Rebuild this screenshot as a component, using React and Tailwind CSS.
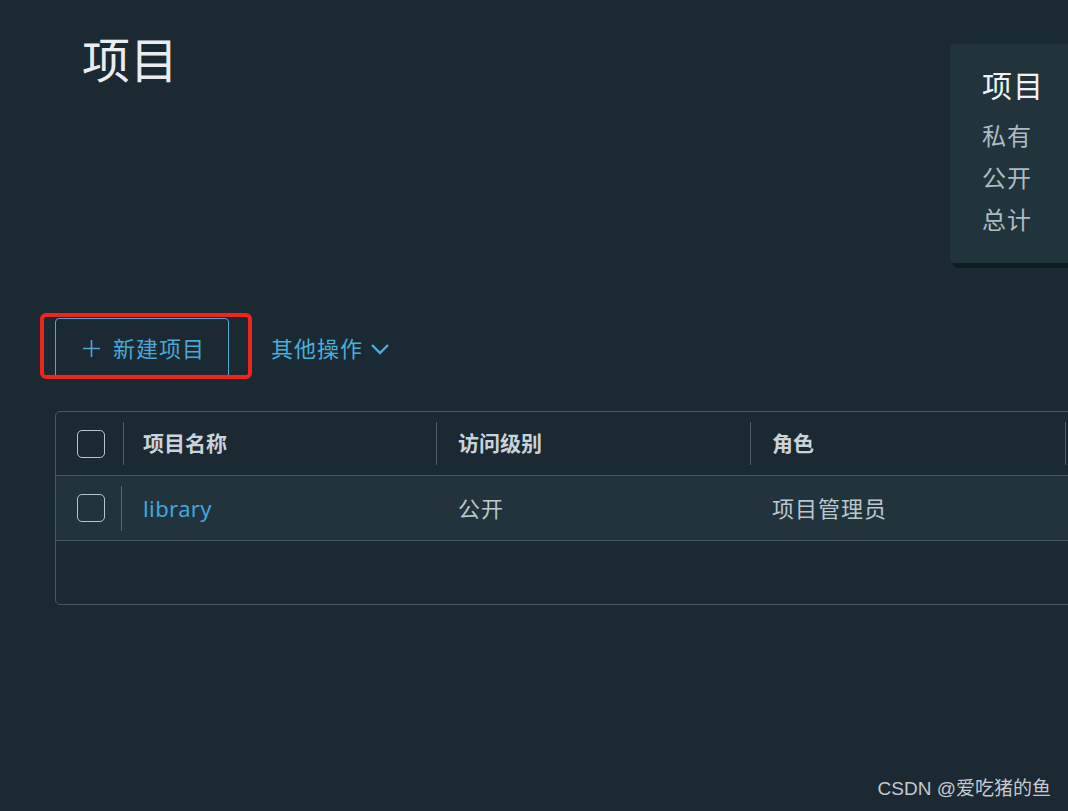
import React from 'react'

const font = { fontFamily: '"Noto Sans", "Noto Sans CJK SC", sans-serif' }

function Checkbox() {
  return <div className="w-[28px] h-[28px] rounded-[5px] border border-[#b9c5cc]" />
}

function Sep({ className = '' }) {
  return <div className={`w-px bg-[#4d5d66] ${className}`} />
}

export default function App() {
  return (
    <div className="relative w-[1068px] h-[811px] overflow-hidden bg-[#1b2932]" style={font}>
      {/* header */}
      <div className="flex items-start">
        <h1 className="flex-1 pl-[82px] pt-[36px] text-[48px] leading-[48px] font-normal text-[#e9edf0]">项目</h1>
        <div className="w-[200px] shrink-0 -mr-[82px] mt-[44px] h-[219px] rounded-[5px] bg-[#22343b] shadow-[3px_5px_0_#111a20] pl-[32px] pt-[21px]">
          <div className="text-[30px] leading-[42px] tracking-[1px] text-[#eef2f4] mb-[8px]">项目</div>
          <div className="text-[24px] leading-[42px] tracking-[1px] text-[#aebbc3]">私有</div>
          <div className="text-[24px] leading-[42px] tracking-[1px] text-[#aebbc3]">公开</div>
          <div className="text-[24px] leading-[42px] tracking-[1px] text-[#aebbc3]">总计</div>
        </div>
      </div>

      {/* toolbar */}
      <div className="flex items-center mt-[55px] pl-[55px]">
        <div className="relative">
          <button className="h-[61px] flex items-center border border-[#4fa9d3] rounded-[4px] pl-[26px] pr-[23px] text-[22px] tracking-[1px] text-[#4aa7d6]">
            <svg width="19" height="19" viewBox="0 0 19 19" className="mr-[12px]">
              <path d="M9.5 1v17M1 9.5h17" stroke="#4aa7d6" strokeWidth="1.6" fill="none" />
            </svg>
            新建项目
          </button>
          <div className="absolute left-[-15px] top-[-5px] w-[212px] h-[66px] border-[4px] border-[#f2231b] rounded-[6px] pointer-events-none" />
        </div>
        <button className="ml-[42px] flex items-center text-[22px] tracking-[1px] text-[#4aaedb]">
          其他操作
          <svg width="20" height="14" viewBox="0 0 20 14" className="ml-[7px]">
            <path d="M2 3l8 8 8-8" stroke="#4aaedb" strokeWidth="2.4" fill="none" />
          </svg>
        </button>
      </div>

      {/* table */}
      <div className="ml-[55px] mt-[32px] w-[1100px] border border-[#485962] rounded-[5px]">
        <div className="flex h-[64px] items-center border-b border-[#485962] text-[21px] font-bold text-[#c9d3d9]">
          <div className="w-[67px] pl-[21px] flex items-center">
            <Checkbox />
          </div>
          <Sep className="h-[43px]" />
          <div className="w-[312px] pl-[19px]">项目名称</div>
          <Sep className="h-[43px]" />
          <div className="w-[313px] pl-[21px]">访问级别</div>
          <Sep className="h-[43px]" />
          <div className="w-[314px] pl-[21px]">角色</div>
          <Sep className="h-[43px]" />
        </div>
        <div className="flex h-[65px] items-center bg-[#22333b] border-b border-[#485962] text-[22px] tracking-[1px] text-[#b9c7cf]">
          <div className="w-[65px] pl-[21px] flex items-center">
            <Checkbox />
          </div>
          <Sep className="h-[45px] bg-[#56666f]" />
          <div className="w-[314px] pl-[21px] text-[#3fa8de] tracking-[0.4px]">library</div>
          <div className="w-[314px] pl-[22px]">公开</div>
          <div className="w-[314px] pl-[22px]">项目管理员</div>
        </div>
        <div className="h-[63px]" />
      </div>

      <div className="absolute right-[17px] bottom-[8px] text-[19px] text-[#c3cace]" style={{ fontFamily: '"Liberation Sans", "Noto Sans CJK SC", sans-serif' }}>
        CSDN @爱吃猪的鱼
      </div>
    </div>
  )
}
